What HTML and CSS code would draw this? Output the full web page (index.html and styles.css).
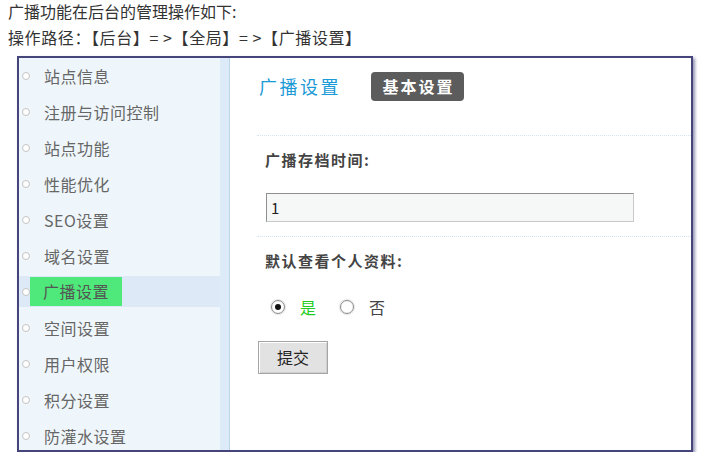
FILE: index.html
```html
<!DOCTYPE html>
<html lang="zh">
<head>
<meta charset="utf-8">
<title>广播设置</title>
<link rel="stylesheet" href="styles.css">
</head>
<body>
<div class="page">
  <p class="intro first">广播功能在后台的管理操作如下:</p>
  <p class="intro path">操作路径：【后台】= &gt;【全局】= &gt;【广播设置】</p>
  <div class="frame">
    <ul class="menu">
      <li><span class="row"><i class="dot"></i><span class="lbl">站点信息</span></span></li>
      <li><span class="row"><i class="dot"></i><span class="lbl">注册与访问控制</span></span></li>
      <li><span class="row"><i class="dot"></i><span class="lbl">站点功能</span></span></li>
      <li><span class="row"><i class="dot"></i><span class="lbl">性能优化</span></span></li>
      <li><span class="row"><i class="dot"></i><span class="lbl">SEO设置</span></span></li>
      <li><span class="row"><i class="dot"></i><span class="lbl">域名设置</span></span></li>
      <li class="active"><span class="row"><i class="dot"></i><span class="lbl">广播设置</span></span></li>
      <li><span class="row"><i class="dot"></i><span class="lbl">空间设置</span></span></li>
      <li><span class="row"><i class="dot"></i><span class="lbl">用户权限</span></span></li>
      <li><span class="row"><i class="dot"></i><span class="lbl">积分设置</span></span></li>
      <li><span class="row"><i class="dot"></i><span class="lbl">防灌水设置</span></span></li>
    </ul>
    <div class="content">
      <div class="head">
        <span class="title">广播设置</span>
        <span class="badge">基本设置</span>
      </div>
      <div class="section">
        <div class="label">广播存档时间:</div>
        <div class="input">1</div>
      </div>
      <div class="section last">
        <div class="label">默认查看个人资料:</div>
        <div class="radios">
          <span class="radio checked"></span><span class="opt yes">是</span>
          <span class="radio"></span><span class="opt">否</span>
        </div>
        <div class="btn">提交</div>
      </div>
    </div>
  </div>
</div>
</body>
</html>
```
FILE: styles.css
```css
html, body {
  margin: 0;
  padding: 0;
  background: #fff;
}
.page {
  font-family: "Noto Sans CJK SC", "Noto Sans", sans-serif;
  padding: 0 0 0 8px;
}
.intro {
  margin: 0;
  font-size: 16px;
  line-height: 20px;
  color: #333;
  height: 20px;
}
.intro.first {
  line-height: 23px;
  height: 23px;
}
.intro.path {
  margin-top: 4px;
  letter-spacing: 0.6px;
}
.frame {
  margin: 9px 0 0 9px;
  width: 672px;
  height: 392px;
  border: 2px solid #45457c;
  box-shadow: 2px 2px 3px rgba(60, 60, 120, 0.55);
  display: flex;
  background: #fff;
}
.menu {
  list-style: none;
  margin: 0;
  padding: 0;
  width: 201px;
  background: #eff6fb;
  border-right: 9px solid #dcebf7;
  box-shadow: 1px 0 0 #bcd6ec;
  flex: none;
}
.menu li {
  height: 36px;
  padding: 2px 0 3px;
  box-sizing: border-box;
}
.row {
  display: flex;
  align-items: center;
  height: 31px;
}
.dot {
  width: 6px;
  height: 6px;
  border: 1px solid #c4c4c4;
  border-radius: 50%;
  background: #fff;
  margin: 0 0 0 3px;
  flex: none;
}
.lbl {
  font-size: 16px;
  color: #666;
  margin-left: 14px;
  letter-spacing: 0.5px;
}
.active .row {
  background: #dde9f6;
}
.active .lbl {
  background: #4ee97a;
  color: #555;
  margin-left: 0;
  padding: 0 13px 0 13px;
  line-height: 29px;
  height: 29px;
}
.content {
  flex: 1;
  padding-left: 28px;
  display: flex;
  flex-direction: column;
}
.head {
  display: flex;
  align-items: flex-start;
  height: 77px;
  padding-top: 14px;
  box-sizing: border-box;
}
.title {
  font-size: 18px;
  letter-spacing: 2.5px;
  color: #1a9ad6;
  margin-left: 2px;
  line-height: 29px;
}
.badge {
  margin-left: 30px;
  background: #5c5c5c;
  color: #fff;
  font-size: 16px;
  font-weight: bold;
  letter-spacing: 2px;
  height: 29px;
  line-height: 29px;
  width: 93px;
  text-align: center;
  border-radius: 4px;
  padding-left: 2px;
  box-sizing: border-box;
}
.section {
  border-top: 1px dotted #d4e4f1;
  padding: 14px 0 14px 8px;
}
.label {
  font-size: 15px;
  font-weight: bold;
  color: #444;
  letter-spacing: 1.5px;
  line-height: 20px;
  height: 20px;
}
.input {
  margin: 23px 0 0 1px;
  width: 368px;
  height: 29px;
  box-sizing: border-box;
  border: 1px solid #c9c9c9;
  border-top-color: #8f8f8f;
  border-left-color: #8f8f8f;
  background: #f6f8f8;
  font-size: 15px;
  line-height: 27px;
  padding-left: 4px;
  color: #222;
}
.radios {
  display: flex;
  align-items: center;
  margin-top: 26px;
  height: 20px;
  padding-left: 6px;
}
.radio {
  width: 12px;
  height: 12px;
  border-radius: 50%;
  border: 1px solid #8c8c8c;
  background: radial-gradient(circle, #fff 55%, #e4e4e4 100%);
  box-shadow: 0 0 1px 1px #e6e6e6;
  position: relative;
  flex: none;
}
.radio.checked::after {
  content: "";
  position: absolute;
  left: 3px;
  top: 3px;
  width: 6px;
  height: 6px;
  border-radius: 50%;
  background: #111;
}
.opt {
  font-size: 16px;
  color: #444;
  margin: 0 24px 0 15px;
}
.opt.yes {
  color: #22cc22;
}
.btn {
  margin: 24px 0 0 -7px;
  width: 70px;
  height: 33px;
  box-sizing: border-box;
  border: 1px solid #a5a5a5;
  box-shadow: inset 1px 1px 0 #fff, inset -1px -1px 0 #cfcfcf;
  background: #e2e2e2;
  font-size: 16px;
  color: #222;
  text-align: center;
  line-height: 31px;
}
```
